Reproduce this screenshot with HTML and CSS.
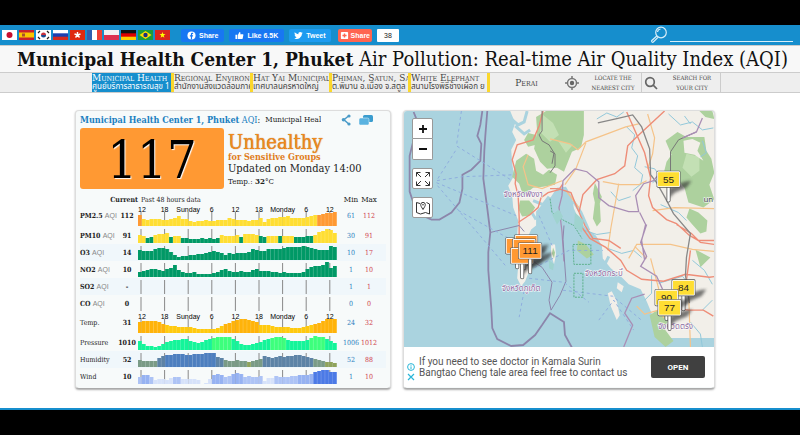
FILE: index.html
```html
<!DOCTYPE html>
<html lang="en">
<head>
  <meta charset="UTF-8" />
  <title>Municipal Health Center 1, Phuket Air Pollution: Real-time Air Quality Index (AQI)</title>
  <link rel="stylesheet" href="styles.css">
</head>
<body>
  <!-- Top bar -->
  <header class="topbar">
    <nav class="flags" aria-label="Languages">
      <a href="#" aria-label="Japanese"><svg viewBox="0 0 15 10"><path fill="#fff" d="M0 0h15v10H0z"/><circle cx="7.500" cy="5" r="3" fill="#c8102e"/></svg></a>
      <a href="#" aria-label="Spanish"><svg viewBox="0 0 15 10"><path fill="#c8202e" d="M0 0h15v10H0z"/><path fill="#fbc500" d="M0 2.500h15v5H0z"/><path fill="#a8502e" d="M3 3.500h3v3H3z"/></svg></a>
      <a href="#" aria-label="Korean"><svg viewBox="0 0 15 10"><path fill="#fff" d="M0 0h15v10H0z"/><path fill="#c8303e" d="M5 5a2.500 2.500 0 0 1 5 0z"/><path fill="#1a4a90" d="M5 5a2.500 2.500 0 0 0 5 0z"/><path stroke="#222" stroke-width="1.200" d="M2 3l2-2M11 1l2 2M2 7l2 2M11 9l2-2"/></svg></a>
      <a href="#" aria-label="Russian"><svg viewBox="0 0 15 10"><path fill="#fff" d="M0 0h15v10H0z"/><path fill="#1c3fb0" d="M0 3.300h15V7H0z"/><path fill="#d52b1e" d="M0 6.700h15V10H0z"/></svg></a>
      <a href="#" aria-label="Hong Kong"><svg viewBox="0 0 15 10"><path fill="#de2910" d="M0 0h15v10H0z"/><path stroke="#fff" stroke-width="1.400" d="M7.500 5V2M7.500 5l3-1M7.500 5l2 2.500M7.500 5l-2 2.500M7.500 5l-3-1"/></svg></a>
      <a href="#" aria-label="French"><svg viewBox="0 0 15 10"><path fill="#fff" d="M0 0h15v10H0z"/><path fill="#2f5fb0" d="M0 0h5v10H0z"/><path fill="#ee4035" d="M10 0h5v10h-5z"/></svg></a>
      <a href="#" aria-label="Polish"><svg viewBox="0 0 15 10"><path fill="#f3eef0" d="M0 0h15v10H0z"/><path fill="#dc3050" d="M0 5h15v5H0z"/></svg></a>
      <a href="#" aria-label="German"><svg viewBox="0 0 15 10"><path fill="#111" d="M0 0h15v10H0z"/><path fill="#d00" d="M0 3.300h15V7H0z"/><path fill="#ffce00" d="M0 6.700h15V10H0z"/></svg></a>
      <a href="#" aria-label="Portuguese"><svg viewBox="0 0 15 10"><path fill="#1a9b3a" d="M0 0h15v10H0z"/><path fill="#fedf00" d="M7.500 1l6 4-6 4-6-4z"/><circle cx="7.500" cy="5" r="2.200" fill="#1c2f80"/></svg></a>
      <a href="#" aria-label="Vietnamese"><svg viewBox="0 0 15 10"><path fill="#da251d" d="M0 0h15v10H0z"/><path fill="#ff0" d="M7.500 2l.8 2.100h2.200L8.700 5.500l.7 2.200-1.900-1.300-1.900 1.300.7-2.200-1.800-1.400h2.200z"/></svg></a>
    </nav>
    <div class="social">
      <button class="soc fb"><svg viewBox="0 0 10 10"><circle cx="5" cy="5" r="4.500" fill="#fff"/><path fill="#1877f2" d="M4.300 9.500V6H3.200V4.600h1.100v-.9C4.300 2.500 5 2 6 2h.8v1.300h-.6c-.5 0-.6.2-.6.6v.7h1.200L6.600 6h-1v3.500z"/></svg>Share</button>
      <button class="soc fb"><svg viewBox="0 0 10 10"><path fill="#fff" d="M.5 4.300h2V9h-2zM3.200 4.500L5 1c1.200 0 1.300 1 .8 2.700h2.700c.8 0 1 .7.700 1.300L8.600 8c-.2.700-.5 1-1.200 1H3.200z"/></svg>Like 6.5K</button>
      <button class="soc tw"><svg viewBox="0 0 24 24"><path fill="#fff" d="M23.600 5c-.9.400-1.800.6-2.700.7 1-.6 1.700-1.500 2.100-2.600-.9.500-1.900.9-3 1.100a4.700 4.700 0 0 0-8.100 4.300C8 8.300 4.500 6.400 2.200 3.600a4.700 4.700 0 0 0 1.500 6.300c-.8 0-1.500-.2-2.200-.6 0 2.400 1.700 4.300 3.800 4.700-.7.200-1.400.2-2.100.1a4.700 4.700 0 0 0 4.400 3.300A9.500 9.500 0 0 1 .6 19.300 13.400 13.400 0 0 0 21.200 7.400c.9-.7 1.700-1.500 2.400-2.400z"/></svg>Tweet</button>
      <button class="soc add"><svg viewBox="0 0 10 10"><rect x="1" y="1" width="8" height="8" rx="1" fill="#fff"/><path stroke="#ff6550" stroke-width="1.600" d="M5 2.700v4.600M2.700 5h4.600"/></svg>Share</button>
      <span class="count">38</span>
    </div>
    <label class="search">
      <svg viewBox="0 0 18 18"><g fill="none" stroke="#d8eef8" stroke-width="1.200"><circle cx="11" cy="6.500" r="5.300"/><path d="M7.500 6a3.500 3.500 0 0 1 3-3"/><path d="M6.800 10l-5 4.500c-.8.900.6 2.300 1.500 1.500l4.700-4.700"/></g></svg>
      <input type="text" aria-label="Search" />
    </label>
  </header>

  <h1><b>Municipal Health Center 1, Phuket</b> Air Pollution: Real-time Air Quality Index (AQI)</h1>

  <!-- Stations nearby -->
  <nav class="stations">
    <a href="#" class="station active">Municipal Health<span>ศูนย์บริการสาธารณสุข 1</span></a>
    <a href="#" class="station">Regional Environment<span>สำนักงานสิ่งแวดล้อมภาค</span></a>
    <a href="#" class="station">Hat Yai Municipality<span>เทศบาลนครหาดใหญ่</span></a>
    <a href="#" class="station">Phiman, Satun, Satun<span>ต.พิมาน อ.เมือง จ.สตูล</span></a>
    <a href="#" class="station">White Elephant<span>สนามโรงพิธีช้างเผือก ย</span></a>
    <a href="#" class="other">Perai</a>
    <a href="#" class="tool">
      <svg viewBox="0 0 14 14"><g fill="none" stroke="#777" stroke-width="1.500"><circle cx="7" cy="7" r="4.500"/><path d="M7 0v3M7 11v3M0 7h3M11 7h3"/></g><circle cx="7" cy="7" r="2.200" fill="#666"/></svg>
      <span>Locate the nearest city</span>
    </a>
    <a href="#" class="tool">
      <svg viewBox="0 0 14 14"><g fill="none" stroke="#666" stroke-width="1.700"><circle cx="6" cy="6" r="4.300"/><path d="M9.200 9.200l3.800 3.800"/></g></svg>
      <span>Search for your city</span>
    </a>
  </nav>

  <main>
    <section class="card">
      <div class="card-head">
        <h2><b>Municipal Health Center 1, Phuket</b> AQI<i>:</i></h2>
        <p class="clip">Municipal Health Center</p>
        <a href="#" aria-label="Share"><svg viewBox="0 0 12 12"><path fill="none" stroke="#4a9bc8" stroke-width="1.500" d="M8.500 2L4 5.800l4.500 4"/><circle cx="9" cy="2" r="1.600" fill="#4a9bc8"/><circle cx="3.500" cy="5.800" r="1.800" fill="#4a9bc8"/><circle cx="9" cy="10" r="1.600" fill="#4a9bc8"/></svg></a>
        <a href="#" aria-label="Comments"><svg class="chat" viewBox="0 0 14 12"><rect x="4" y="1" width="10" height="7" rx="1.500" fill="#3b9dcf"/><rect x="0" y="4" width="10" height="7" rx="1.500" fill="#5ab2e0" stroke="#f7fafa" stroke-width=".5"/></svg></a>
      </div>
      <div class="summary">
        <div class="aqi">117</div>
        <div class="status">
          <p class="level">Unhealthy</p>
          <p class="group">for Sensitive Groups</p>
          <p class="updated">Updated on Monday 14:00</p>
          <p class="temp">Temp.: <b>32</b>°C</p>
        </div>
      </div>
      <table>
        <colgroup>
          <col class="col-name">
          <col class="col-cur">
          <col>
          <col class="col-min">
          <col class="col-max">
        </colgroup>
        <thead>
          <tr>
            <th colspan="2" class="current">Current</th>
            <th class="past">Past 48 hours data</th>
            <th>Min</th>
            <th class="max">Max</th>
          </tr>
        </thead>
        <tbody id="rows"></tbody>
      </table>
    </section>

    <section class="map-card">
      <div class="map">
        <svg class="map-canvas" viewBox="0 0 312 237" preserveAspectRatio="xMidYMid slice" role="img" aria-label="Map of Phuket">
          <defs>
            <filter id="soft"><feGaussianBlur stdDeviation="1.500"/></filter>
            <g id="flag">
              <path d="M12 17l16-6 7-1-5 7-12 5-6 6z" fill="#333" opacity=".65" filter="url(#soft)"/>
              <path d="M12 16v14" stroke="#555" stroke-width="4" stroke-linecap="round"/>
              <path d="M12 16v14" stroke="#fff" stroke-width="2.500" stroke-linecap="round"/>
              <rect x="0" y="0" width="24" height="17" rx="1.500" fill="#555"/>
              <rect x=".6" y=".6" width="22.800" height="15.800" rx="1" fill="#fff"/>
              <rect x="1.500" y="1.500" width="21" height="14" fill="currentColor"/>
            </g>
          </defs>
          <path fill="#aad3df" d="M0 0h312v237H0z"/>
          <!-- land -->
          <path fill="#f2efe9" d="M107 0l5 12-3 9 4 8-5 10 1 14 2 12-6 10 4 10 1 12 5 13-1 14 11 2 3-7 5-4 0-14 7-8 8-7 6-9 9-1 6 10 2 12 4 9 8 11 10 7 6 10 1 13 8 10 10 8 8 8 12 5 6 12 5 12 3 12 9 13H312V0z"/>
          <path fill="#f2efe9" d="M113 129l6-4 7 2 2 12-3 14 1 8-4 10-4 5-4-8 1-12-3-15zM205 183l4-2 5 10 3 14-3 5-6-14zM215 172l6 4-2 6-5-4zM148 134l4 0 1 10-2 10-3-10z"/>
          <!-- inlets -->
          <path fill="none" stroke="#aad3df" stroke-width="3" d="M108 8l7 6 6-3 3-11M112 15l9 8 6-4M122 95l6 6 5 8M130 90l10 4 6-8M170 90l8 12 8 18M163 84l4 20M206 146l-6 12M240 190l6 14M262 215l-8 13"/>
          <!-- forests -->
          <g fill="#add19e">
            <path d="M133 6l10-6h38l0 24-3 13-9 4-8 20-7-4-10 1-7-7-6-13 3-18z"/>
            <path d="M113 50l10-7 8 5 2 12 7 4 6-5 8 5-2 10-12 2-10 1-10 8-4-12-7-7z"/>
            <path d="M117 90l9 0 6 7-5 8-8 1-4-8zM125 22l8 2 0 10-8 2-4-7zM122 135l4 5-1 8-3-3zM150 137l2 5-1 6-2-5z"/>
            <path d="M192 72l4 8 3 6-2 7 1 18-4 5-4-8 2-16-2-9z"/>
            <path d="M263 30l12-9 9 5 18 0 2 14 5 8 3 14-5 12 5 15-11 8-15-5-4-15-9-10-12-4 3-12 5-7z"/>
            <path d="M287 98l9 4 9 8-1 11-6 2-9-10-5-6zM297 0h13l2 8-9-2zM293 139l15 8-10 10zM247 205l12-8 8 9-5 13 9 12-8 6-11-10z"/>
            <path d="M175 130l8 4 8 10-7 4-10-8z"/>
          </g>
          <g fill="#c3e0b4"><path d="M140 4l10 8 6 12-9 7-10-10zM284 43l13 3 0 14-8 6-9-9zM155 30l15 4-7 8z"/></g>
          <path fill="#f2efe9" d="M281 30l9-2 8 4-3 8 6 10-9-6-10-2z"/>
          <!-- rivers -->
          <g fill="none" stroke="#91c8da" stroke-width="1">
            <path d="M194 8l10-6 10 4 7-5M224 16l8 8-3 13 6 8-3 12 8 7-2 10M266 3l12 11 12-3 10 8 11-2M242 56l10 2 6 8-8 6M300 30l4 12-6 4M282 5l6 8M228 86l-12 4-8-9M258 94l18 8 8 8M240 72l-10 8"/>
            <path d="M205 138l14 5 12-3 8 7M249 165l0 18-7 7M290 150l12 10 8 14M182 120l12 4 14-2M256 173l24-7 8 10M288 212l10 12 2 13M310 190l-10 10"/>
          </g>
          <!-- roads -->
          <g fill="none" stroke="#f5c389" stroke-width="1.200">
            <path d="M125 44l-5 12 5 18 14 4 20-8M147 28l20 5 8 6 8-8 24-9 16-6 13-3M183 32l-10 26-11 16M200 71l16 3 20 0 8-4M216 73l-8 45-3 22M245 3l7 24-2 16-5 15M163 80l13 17M226 148l8-14 34 0 22 5 22 2M232 136l12 12M250 100l22-3 40 1M248 148l8 30 5 30M286 178l2 59M234 196l8 8 14-4"/>
          </g>
          <g fill="none" stroke="#ee8d78" stroke-width="1.400">
            <path d="M140 0l-4 15-6 14-16 5-5 15 4 14-1 10 3 12 1 22 0 18M115 112l12-8 8-7 3-10 7-5 11-3 4-6"/>
            <path d="M147 78l8 0 13 4 6 15 8 18 8 13 16 2 12 8M262 0l-27 25-10 10-3 20-10 8-18 6-14 15-4 18M224 1l8 18 10 23 6 25-2 18 4 12 14 12 10 4 13 12 9 5h16M177 114l10 14 16 9 15 13 6 10 15 9 22 2 22-7 24 3 14-2M274 114l15 9 9 9 14 2M288 140l-4 30M254 182l13 16 20 2 14 0 10 6"/>
          </g>
          <!-- railway and province borders -->
          <path fill="none" stroke="#888" stroke-width="1.300" d="M195 12l18-4 17-4 9 12 8 22 1 26 6 8 8 14 9 17 17 20-4 24-1 18 4 28"/>
          <path fill="none" stroke="#777" d="M139 0l0 20-3 4 3 6 7 4 5 8-2 11M268 70l0-29 8-12 18-8M147 40l5 3 0 12-5 7"/>
          <path fill="none" stroke="#a98eb5" stroke-width="1.300" d="M172 58l12 3 12 10 0 16 10 8 20 6 10 0-3-16 8-12 10-3 4-5M237 102l6 12-4 16 3 20M172 58l-12 12-1 15-3 12 3 24 2 30M244 114l-6 18 6 14-6 10 16 10 6 13M300 7l-6 14-14 6M242 184l-13 4-7 15 8 12-9 22"/>
          <g fill="none" stroke="#8c86ab" stroke-width="1.800">
            <path d="M79 0l-2 14-3 11 4 8-1 17-9 9-9 5 0 14-3 14-8 10-12 7-8 0-7-3-10-10-5-15 0-36 5-20 8-9-5-5-4-10M84 0l-2 25-1 15-1 28 4 30 3 24-2 20 0 18 3 38 1 20 5 11 14 7 12-1 12-10 7-10 8-12 14 9 1 13 10 18"/>
          </g>
          <path fill="none" stroke="#8c86ab" d="M87 122l29-7 5 6M161 115l-1 14 3 42-6 14-9 15-2-10 3-18-10-15-12-8"/>
          <!-- ferry lines -->
          <g fill="none" stroke="#8fadde" stroke-dasharray="3 3">
            <path d="M58 0l-5 35 56 35M52 40L33 70l26-4 53-2M33 72l80 33M34 75l68 80M55 100l65 36M126 160l40-20 34 0M126 168l35 4 25 20M160 180l50 6 30 25M122 175l-6 32M136 105l13 30M196 210l15-20 20 30"/>
          </g>
          <path fill="none" stroke="#5cb08a" stroke-dasharray="2 1" d="M170 134h18l0 20h-17zM171 163h9v24h-9zM147 88l2 14 12 8 10 5 8 13"/>
          <path fill="#9fd3cf" d="M172 102l9 8-2 12-8-6zM149 104l7-5 4 7-6 8zM146 150l5 4-1 6-4-2z"/>
          <!-- places -->
          <g class="places">
            <text x="120" y="86">จังหวัดพังงา</text>
            <text x="118" y="181">จังหวัดภูเก็ต</text>
            <text x="201" y="166">จังหวัดกระบี่</text>
            <text x="273" y="219">จังหวัดตรัง</text>
            <text x="306" y="91" class="city">un</text>
          </g>
          <!-- readings -->
          <g class="orange">
            <use href="#flag" x="102" y="127"/><use href="#flag" x="111" y="124"/><use href="#flag" x="109" y="128"/><use href="#flag" x="107" y="137"/><use href="#flag" x="115" y="132"/>
          </g>
          <g class="yellow">
            <use href="#flag" x="254" y="60"/><use href="#flag" x="269" y="169"/><use href="#flag" x="252" y="179"/>
          </g>
          <g class="marks"><text x="127" y="144">111</text><text x="266" y="72">55</text><text x="281" y="181">84</text><text x="264" y="191">90</text></g>
          <g class="yellow"><use href="#flag" x="255" y="189"/></g>
          <g class="marks"><text x="267" y="201">77</text></g>
        </svg>
        <div class="controls">
          <div class="zoom">
            <button aria-label="Zoom in"><svg viewBox="0 0 10 10"><path stroke="#111" stroke-width="1.800" d="M5 1v8M1 5h8"/></svg></button>
            <button aria-label="Zoom out"><svg viewBox="0 0 10 10"><path stroke="#111" stroke-width="1.800" d="M1 5h8"/></svg></button>
          </div>
          <button aria-label="Full screen"><svg viewBox="0 0 14 14"><path fill="none" stroke="#333" d="M.5 4.500v-4h4M.5.500L5 5M9.500.500h4v4M13.500.500L9 5M.5 9.500v4h4M.5 13.500L5 9M13.500 9.500v4h-4M13.500 13.500L9 9"/></svg></button>
          <button aria-label="Map type"><svg viewBox="0 0 14 14"><path fill="none" stroke="#333" d="M4 2.500l-3.500-1v10l4 1.500 5-1.500 4 1.500V3l-3-1.500M7 8.500C5.500 6 4.700 5 4.700 3.700a2.300 2.300 0 0 1 4.600 0C9.300 5 8.500 6 7 8.500z"/><circle cx="7" cy="3.700" r=".8" fill="#333"/></svg></button>
        </div>
      </div>
      <div class="ad">
        <div class="ad-marks">
          <svg viewBox="0 0 8 8"><g fill="none" stroke="#29b6d8"><circle cx="4" cy="4" r="3.400"/><path d="M4 3.400V6.200M4 1.800v.9"/></g></svg>
          <svg viewBox="0 0 8 8"><path stroke="#29b6d8" stroke-width="1.200" d="M1 1l6 6M7 1L1 7"/></svg>
        </div>
        <p>If you need to see doctor in Kamala Surin<br>Bangtao Cheng tale area feel free to contact us</p>
        <button class="open">OPEN</button>
      </div>
    </section>
  </main>
  <footer></footer>
  <script src="charts.js"></script>
</body>
</html>
```
FILE: styles.css
```css
* {
  box-sizing: border-box;
}

body {
  margin: 0;
  padding-top: 25px;
  background: #000;
  font-family: "DejaVu Serif Condensed", "DejaVu Serif", "Noto Sans Thai", serif;
  font-size: 9px;
  color: #222;
}

h1, h2, p {
  margin: 0;
  font-weight: normal;
}

a {
  color: inherit;
  text-decoration: none;
}

button {
  padding: 0;
  border: 0;
  cursor: pointer;
}

svg {
  display: block;
}

/* top bar */
.topbar {
  display: flex;
  align-items: center;
  height: 20px;
  padding: 0 7px 0 2px;
  background: #168ecd;
}

.flags {
  display: flex;
  gap: 2px;
}

.flags svg {
  width: 15px;
  height: 10px;
}

.social {
  display: flex;
  gap: 5px;
  margin-left: 11px;
  height: 13px;
}

.soc {
  display: flex;
  align-items: center;
  gap: 3px;
  padding: 0 5px;
  border-radius: 2px;
  color: #fff;
  font: bold 7px/13px "Liberation Sans", sans-serif;
}

.soc svg {
  width: 9px;
  height: 9px;
}

.fb {
  padding: 0 6px;
  background: #1877f2;
}

.tw {
  background: #1d9bf0;
}

.add {
  gap: 2px;
  margin-left: 2px;
  padding: 0 2px;
  background: #ff6550;
}

.count {
  width: 22px;
  background: #fff;
  border-radius: 1px;
  text-align: center;
  font: 7px/13px "Liberation Sans", sans-serif;
}

.search {
  display: flex;
  gap: 2px;
  margin-left: auto;
}

.search svg {
  width: 18px;
  height: 18px;
}

.search input {
  width: 123px;
  height: 16px;
  border: 0;
  border-bottom: 1px solid #d8eef8;
  background: transparent;
  color: #fff;
  outline: none;
}

h1 {
  height: 27px;
  padding-left: 17px;
  overflow: hidden;
  border-top: 1px solid #ccc;
  background: #f8f8f8;
  color: #111;
  font-size: 20px;
  line-height: 26px;
  white-space: nowrap;
}

h1 b {
  font-size: 19px;
}

/* stations */
.stations {
  display: flex;
  height: 21px;
  padding-left: 92px;
  background: #eee;
  border-top: 1px solid #ccc;
  border-bottom: 1px solid #ccc;
  color: #444;
}

.station {
  width: 79px;
  overflow: hidden;
  border-right: 3px solid #fbd82c;
  font-size: 10px;
  font-variant: small-caps;
  line-height: 10px;
  white-space: nowrap;
}

.station span {
  display: block;
  font: 8px/9px "Noto Sans Thai", "Liberation Sans", sans-serif;
}

.station.active {
  width: 82px;
  background: #168ecd;
  color: #fff;
}

.other {
  width: 73px;
  text-align: center;
  font-size: 10px;
  font-variant: small-caps;
  line-height: 20px;
}

.tool {
  display: flex;
  align-items: center;
  width: 79px;
  padding-left: 2px;
  border-right: 1px solid #ccc;
  font-size: 6px;
  line-height: 10px;
  text-align: center;
  text-transform: uppercase;
}

.tool svg {
  width: 14px;
  height: 14px;
  flex: none;
}

.tool span {
  flex: 1;
  padding: 0 4px 0 10px;
}

/* cards */
main {
  display: grid;
  grid-template-columns: 316fr 312fr;
  gap: 12px;
  padding: 17px 85px 19px 75px;
  background: #fff;
}

.card, .map-card {
  overflow: hidden;
  border: 1px solid #ddd;
  border-bottom-color: #aaa;
  border-radius: 4px;
  box-shadow: 0 1px 2px #aaa;
  background: #f7fafa;
}

.card {
  padding: 0 4px 3px;
}

.card-head {
  display: flex;
  align-items: center;
  height: 17px;
}

.card-head h2 {
  color: #1c80c0;
  font-size: 9px;
  white-space: nowrap;
}

.card-head i {
  color: #222;
  font-style: normal;
}

.clip {
  width: 56px;
  margin: 0 auto 0 5px;
  overflow: hidden;
  font-size: 8px;
  white-space: nowrap;
}

.card-head svg {
  width: 12px;
  height: 12px;
  margin-right: 7px;
}

.card-head .chat {
  width: 14px;
  margin-right: 13px;
}

.summary {
  display: flex;
  gap: 4px;
}

.aqi {
  width: 144px;
  height: 61px;
  border-radius: 3px;
  background: #ff9933;
  color: #000;
  font-size: 52px;
  line-height: 65px;
  text-align: center;
  text-shadow: 1px 1px 1px #fff;
}

.status {
  padding-top: 3px;
}

.level {
  color: #f08a1c;
  font-size: 20px;
  line-height: 22px;
  text-shadow: 0 0 1px #a85a10;
}

.group {
  color: #e07d1a;
  font-size: 9px;
  font-weight: bold;
  line-height: 9px;
}

.updated {
  font-size: 11px;
  line-height: 13px;
}

.temp {
  font-size: 8px;
  line-height: 13px;
}

/* data table */
table {
  width: 100%;
  margin-top: 6px;
  border-collapse: collapse;
  table-layout: fixed;
  font-size: 8px;
}

.col-name {
  width: 36px;
}

.col-cur {
  width: 22px;
}

.col-min {
  width: 18px;
}

.col-max {
  width: 26px;
}

th, td {
  padding: 0;
  font-weight: normal;
  text-align: center;
  white-space: nowrap;
}

thead tr {
  height: 10px;
  line-height: 10px;
}

thead .current {
  font-size: 7px;
  font-weight: bold;
  text-align: right;
}

thead .past {
  padding-left: 3px;
  font-size: 7px;
  text-align: left;
}

tbody tr {
  height: 17px;
  font-size: 7px;
  line-height: 12px;
}

tbody .tall {
  height: 22px;
}

tbody tr:nth-child(odd) {
  background: #f0f7fb;
}

tbody .tall:nth-child(n) {
  background: #f7fafa;
}

.name {
  font-weight: bold;
  text-align: left;
}

.weather {
  font-weight: normal;
}

.name span {
  color: #888;
  font: 7px "Liberation Sans", sans-serif;
}

.cur {
  font-weight: bold;
}

.min {
  color: #2c7fc0;
}

.max {
  padding-right: 8px;
}

td.max {
  color: #d0404c;
}

.chart {
  width: 199px;
  height: 17px;
}

.tall .chart {
  height: 22px;
}

.chart text {
  font: 7px "Liberation Sans", sans-serif;
  text-anchor: middle;
}

/* map */
.map {
  position: relative;
  height: 236px;
}

.map-canvas {
  width: 100%;
  height: 236px;
}

.controls {
  position: absolute;
  top: 7px;
  left: 8px;
  display: grid;
  gap: 8px;
}

.controls button {
  display: grid;
  place-items: center;
  width: 21px;
  height: 21px;
  border: 1px solid #999;
  border-radius: 2px;
  background: #fff;
}

.controls .zoom button {
  border-radius: 2px 2px 0 0;
}

.controls .zoom button + button {
  border-top: 0;
  border-radius: 0 0 2px 2px;
}

.controls svg {
  width: 14px;
  height: 14px;
}

.controls .zoom svg {
  width: 10px;
  height: 10px;
}

.places text {
  fill: #8b6aa0;
  stroke: #fff;
  stroke-width: 1px;
  paint-order: stroke;
  font: 8px "Noto Sans Thai", "Noto Sans", sans-serif;
  text-anchor: middle;
}

.places .city {
  fill: #444;
}

.orange {
  color: #ff9933;
}

.yellow {
  color: #ffde33;
}

.marks text {
  fill: #222;
  font: 10px "Liberation Sans", sans-serif;
  text-anchor: middle;
}

/* advert */
.ad {
  display: flex;
  align-items: center;
  height: 40px;
  padding: 0 9px 0 3px;
  background: #fff;
}

.ad-marks {
  display: grid;
  gap: 2px;
  width: 12px;
  padding-top: 10px;
}

.ad-marks svg {
  width: 8px;
  height: 8px;
}

.ad p {
  flex: 1;
  color: #555;
  font: 10px/11px Roboto, sans-serif;
}

.open {
  width: 54px;
  height: 22px;
  border-radius: 2px;
  background: #404040;
  color: #fff;
  font: bold 8px Roboto, sans-serif;
}

footer {
  border-top: 2px solid #168ecd;
}
```
FILE: charts.js
```javascript
const GREEN = "#009966";
const YELLOW = "#ffde33";
const ORANGE = "#ff9933";
const STEP = 3.9;

// one letter per hour
const pm10 = "yyggyyyygyyggggggggggyyyyygyyyyggyyygyyygggggyyyyyy";

const rows = [
  { name: "PM2.5", aqi: true, cur: "112", min: 61, max: 112, tall: true,
    data: [11,7,6,7,7,7,6,6,7,8,10,7,7,5,4,5,5,6,5,5,6,6,6,8,7,6,6,6,5,6,6,8,4,7,8,8,9,9,10,8,8,8,8,9,10,11,11,12,13,13,14],
    color: i => i === 0 || i > 45 ? ORANGE : YELLOW },
  { name: "PM10", aqi: true, cur: "91", min: 30, max: 91,
    data: [8,7,5,6,8,9,9,10,6,7,7,5,5,4,4,4,5,4,5,4,5,8,7,7,7,8,6,9,9,9,8,7,6,7,7,7,7,7,7,7,6,6,6,7,7,8,11,12,14,13,10],
    color: i => pm10[i] === "g" ? GREEN : YELLOW },
  { name: "O3", aqi: true, cur: "14", min: 10, max: 17,
    data: [10,9,9,9,11,12,12,11,8,5,3,4,4,5,5,6,6,7,8,9,8,7,5,7,6,7,7,7,8,11,10,9,9,11,11,11,11,12,13,13,13,13,14,13,12,11,10,10,10,14,13],
    color: () => GREEN },
  { name: "NO2", aqi: true, cur: "10", min: 1, max: 10,
    data: [5,6,7,8,8,7,6,8,9,12,7,5,4,4,5,3,3,3,3,4,5,7,8,6,5,5,6,5,5,7,8,6,6,6,5,5,4,5,4,4,4,4,5,8,10,11,11,12,15,9,11],
    color: () => GREEN },
  { name: "SO2", aqi: true, cur: "-", min: 1, max: 1, data: [] },
  { name: "CO", aqi: true, cur: "0", min: 0, max: 0, data: [] },
  { name: "Temp.", cur: "31", min: 24, max: 32, tall: true,
    data: [11,12,12,12,12,11,9,8,7,7,6,6,6,6,5,4,4,4,4,4,5,7,9,10,12,13,14,14,13,12,11,8,8,8,7,6,6,6,6,5,5,5,6,7,8,9,10,12,14,14,14],
    color: (i, v) => v > 8 ? "#ffb30a" : "#ffc90e" },
  { name: "Pressure", cur: "1010", min: 1006, max: 1012,
    data: [9,6,4,4,3,4,6,8,9,10,10,11,11,9,8,7,8,10,11,12,13,13,13,13,11,9,6,5,5,6,7,8,10,11,12,13,13,12,10,9,9,9,9,10,12,14,13,13,11,9,7],
    color: (i, v) => v > 11 ? "#3dff7c" : "#14f59a" },
  { name: "Humidity", cur: "52", min: 52, max: 88,
    data: [7,6,6,6,6,9,11,12,12,13,13,13,12,12,13,13,13,14,14,14,10,9,7,6,6,7,6,6,5,6,7,8,11,10,9,10,11,10,11,11,12,12,11,10,9,8,7,6,5,5,4],
    color: (i, v) => v > 11 && i < 20 ? "#4d7fbf" : v > 8 ? "#5d83a6" : v > 5 ? "#7a9b86" : "#8fa35c" },
  { name: "Wind", cur: "10", min: 1, max: 10,
    data: [7,9,9,7,4,5,5,4,6,7,7,5,5,5,5,4,0,1,5,9,10,9,7,8,10,11,10,7,8,7,7,8,3,6,6,8,7,7,7,8,8,9,9,9,10,12,13,14,14,12,12],
    color: (i, v) => v > 11 ? "#4c7ae6" : v > 8 ? "#96b2f2" : v > 6 ? "#adc3f5" : "#d6e2fa" }
];

const hours = ["12", "18", "Sunday", "6", "12", "18", "Monday", "6", "12"];

function drawChart(row) {
  const h = row.tall ? 22 : 17;
  let svg = `<svg class="chart" viewBox="0 0 199 ${h}">`;
  hours.forEach((label, i) => {
    const x = 3 + i * 23.6;
    svg += `<path d="M${x} ${row.tall ? 7 : 2}V${h - 1}" stroke="#888"/>`;
  });
  row.data.forEach((v, i) => {
    const c = row.color(i, v);
    svg += `<rect x="${i * STEP}" y="${h - 1 - v}" width="${STEP}" height="${v}" fill="${c}" opacity=".75"/>`;
    svg += `<rect x="${i * STEP}" y="${h - 1 - v}" width="3.3" height="${v}" fill="${c}"/>`;
  });
  if (row.tall) {
    hours.forEach((label, i) => {
      svg += `<text x="${Math.max(4, 3 + i * 23.6)}" y="7">${label}</text>`;
    });
  }
  return svg + "</svg>";
}

document.getElementById("rows").innerHTML = rows.map(row => `
  <tr class="${row.tall ? "tall" : ""}">
    <th class="name ${row.aqi ? "" : "weather"}">${row.name}${row.aqi ? " <span>AQI</span>" : ""}</th>
    <td class="cur">${row.cur}</td>
    <td>${drawChart(row)}</td>
    <td class="min">${row.min}</td>
    <td class="max">${row.max}</td>
  </tr>`).join("");
```
